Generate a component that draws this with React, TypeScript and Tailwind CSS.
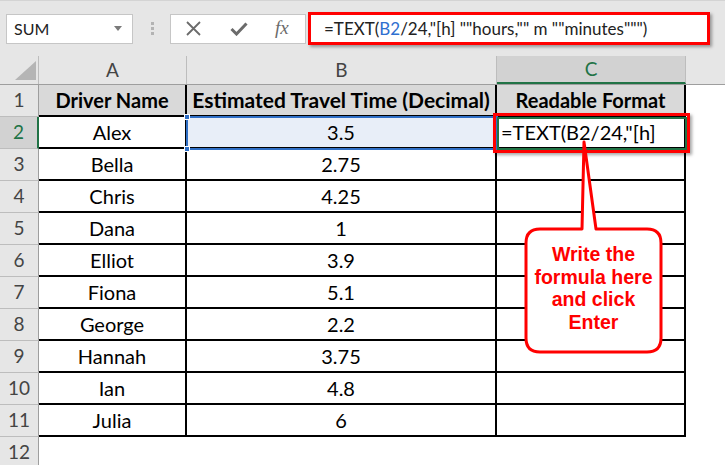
import React from 'react'

const rows: [string, string][] = [
  ['Alex', '3.5'],
  ['Bella', '2.75'],
  ['Chris', '4.25'],
  ['Dana', '1'],
  ['Elliot', '3.9'],
  ['Fiona', '5.1'],
  ['George', '2.2'],
  ['Hannah', '3.75'],
  ['Ian', '4.8'],
  ['Julia', '6'],
]

const font = { fontFamily: 'Lato, "Open Sans", sans-serif' }

function Toolbar() {
  return (
    <div className="h-[56px] bg-[#e6e6e6] flex items-center pl-[6px] border-t border-[#d4d4d4]">
      <div className="w-[127px] h-[30px] bg-white border border-[#c6c6c6] flex items-center justify-between pl-[7px] pr-[10px]">
        <span className="text-[16px] text-[#222]">SUM</span>
        <svg width="8" height="5" viewBox="0 0 8 5"><polygon points="0,0 8,0 4,5" fill="#7a7a7a" /></svg>
      </div>
      <div className="ml-[18px] w-[3px] flex flex-col gap-[2px]">
        <span className="w-[3px] h-[3px] bg-[#b3b3b3]" />
        <span className="w-[3px] h-[3px] bg-[#b3b3b3]" />
        <span className="w-[3px] h-[3px] bg-[#b3b3b3]" />
      </div>
      <div className="ml-[16px] w-[136px] h-[30px] bg-white border border-[#c6c6c6] flex items-center pl-[15px]">
        <svg width="15" height="15" viewBox="0 0 15 15">
          <path d="M1 1 L14 14 M14 1 L1 14" stroke="#6b6b6b" strokeWidth="1.8" />
        </svg>
        <svg className="ml-[29px]" width="18" height="14" viewBox="0 0 18 14">
          <path d="M1.5 7 L6.5 12 L16.5 1.5" stroke="#6b6b6b" strokeWidth="3" fill="none" />
        </svg>
        <span className="ml-[27px] text-[19px] italic text-[#6b6b6b]" style={{ fontFamily: '"Liberation Serif", serif' }}>fx</span>
      </div>
      <div className="ml-[2px] w-[402px] h-[33px] bg-white border-[3px] border-[#ff0000] shadow-[2px_2px_3px_rgba(0,0,0,0.35)] flex items-center pl-[13px]">
        <span className="text-[17px] text-[#222] whitespace-nowrap">
          =TEXT(<span className="text-[#2f6fd0]">B2</span>/24,"[h] ""hours,"" m ""minutes""")
        </span>
      </div>
    </div>
  )
}

function ColumnHeaders() {
  return (
    <div className="h-[29px] flex border-b border-[#9e9e9e] bg-[#e6e6e6] text-[19px] text-[#444]">
      <div className="w-[39px] border-r border-[#bdbdbd] relative">
        <svg className="absolute left-0 top-0" width="39" height="28" viewBox="0 0 39 28">
          <polygon points="15,24 36,24 36,5" fill="#b5b5b5" />
        </svg>
      </div>
      <div className="w-[148px] border-r border-[#bdbdbd] flex items-center justify-center">A</div>
      <div className="w-[310px] border-r border-[#bdbdbd] flex items-center justify-center">B</div>
      <div className="w-[189px] border-r border-[#bdbdbd] border-b-2 border-b-[#217346] bg-[#d2d2d2] text-[#217346] flex items-center justify-center">C</div>
      <div className="flex-1" />
    </div>
  )
}

function RowHead({ n, active }: { n: number; active?: boolean }) {
  return (
    <div
      className={
        'w-[39px] shrink-0 flex items-center justify-center border-b border-[#bdbdbd] text-[19px] ' +
        (active
          ? 'bg-[#d2d2d2] text-[#217346] border-r-2 border-r-[#217346]'
          : 'bg-[#e6e6e6] text-[#444] border-r border-r-[#9e9e9e]')
      }
    >
      {n}
    </div>
  )
}

const cell = 'border-r-2 border-b-2 border-black flex items-center justify-center text-[20px] text-black'

export default function App() {
  return (
    <div className="relative w-[725px] h-[465px] overflow-hidden bg-white" style={font}>
      <Toolbar />
      <ColumnHeaders />
      <div className="flex h-[32px]">
        <RowHead n={1} />
        <div className={cell + ' w-[148px] bg-[#d9d9d9] font-bold'}>Driver Name</div>
        <div className={cell + ' w-[310px] bg-[#d9d9d9] font-bold text-[21px]'}>Estimated Travel Time (Decimal)</div>
        <div className={cell + ' w-[189px] bg-[#d9d9d9] font-bold'}>Readable Format</div>
        <div className="flex-1" />
      </div>
      {rows.map(([name, val], i) => (
        <div key={name} className="flex h-[32px]">
          <RowHead n={i + 2} active={i === 0} />
          <div className={cell + ' w-[148px]'}>{name}</div>
          <div className={cell + ' w-[310px] ' + (i === 0 ? 'bg-[#e8eef8]' : '')}>{val}</div>
          <div className={cell + ' w-[189px] justify-start overflow-hidden'}>
            {i === 0 ? <span className="pl-[4px] whitespace-nowrap">=TEXT(B2/24,"[h]</span> : null}
          </div>
          <div className="flex-1" />
        </div>
      ))}
      <div className="flex h-[32px]">
        <RowHead n={12} />
        <div className="flex-1" />
      </div>

      {/* selection on B2 */}
      <div className="absolute left-[186px] top-[116px] w-[312px] h-[34px] border-2 border-[#2f6fc6]" />
      <div className="absolute left-[184px] top-[114px] w-[6px] h-[6px] bg-[#2f6fc6] border border-white" />
      <div className="absolute left-[184px] top-[146px] w-[6px] h-[6px] bg-[#2f6fc6] border border-white" />

      {/* active cell C2 with red highlight */}
      <div className="absolute left-[497px] top-[117px] w-[190px] h-[33px] border-2 border-[#217346]" />
      <div className="absolute left-[493px] top-[113px] w-[197px] h-[40px] border-[3px] border-[#ff0000] shadow-[2px_2px_3px_rgba(0,0,0,0.35)]" />

      {/* callout */}
      <svg className="absolute left-0 top-0" width="725" height="465" viewBox="0 0 725 465">
        <path
          d="M540 229 L582 229 L584 142 L596 229 L647 229 Q661 229 661 243 L661 338 Q661 352 647 352 L540 352 Q526 352 526 338 L526 243 Q526 229 540 229 Z"
          fill="#fff"
          stroke="#ff0000"
          strokeWidth="3"
          strokeLinejoin="round"
        />
      </svg>
      <div
        className="absolute left-[523px] top-[243px] w-[141px] text-center text-[19.5px] leading-[22.5px] font-bold text-[#ff0000]"
        style={{ fontFamily: '"Liberation Sans", Arial, sans-serif' }}
      >
        Write the
        <br />
        formula here
        <br />
        and click
        <br />
        Enter
      </div>
    </div>
  )
}
